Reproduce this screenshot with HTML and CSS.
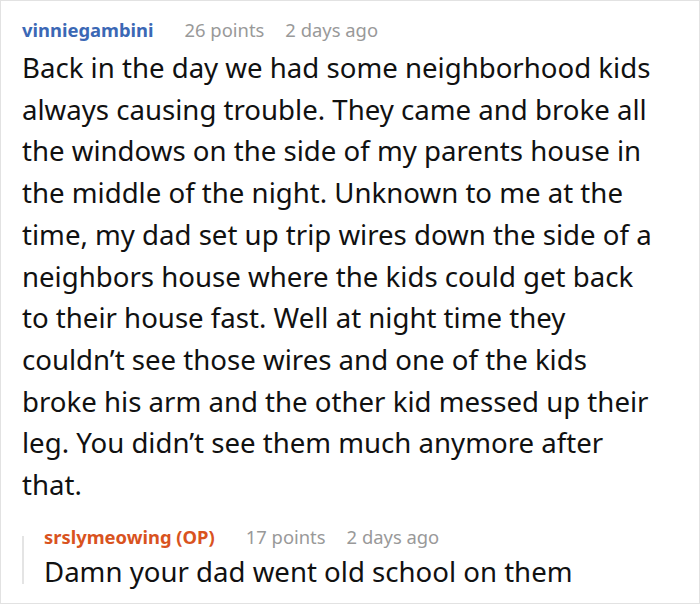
FILE: index.html
```html
<!DOCTYPE html>
<html>
<head>
<meta charset="utf-8">
<link rel="stylesheet" href="styles.css">
</head>
<body>
<div class="card">
  <div class="comment">
    <div class="meta">
      <span class="author">vinniegambini</span>
      <span class="info">26 points</span>
      <span class="info">2 days ago</span>
    </div>
    <p class="text">Back in the day we had some neighborhood kids always causing trouble. They came and broke all the windows on the side of my parents house in the middle of the night. Unknown to me at the time, my dad set up trip wires down the side of a neighbors house where the kids could get back to their house fast. Well at night time they couldn’t see those wires and one of the kids broke his arm and the other kid messed up their leg. You didn’t see them much anymore after that.</p>
  </div>
  <div class="reply">
    <div class="meta">
      <span class="author op">srslymeowing (OP)</span>
      <span class="info">17 points</span>
      <span class="info">2 days ago</span>
    </div>
    <p class="text">Damn your dad went old school on them</p>
  </div>
</div>
</body>
</html>
```
FILE: styles.css
```css
html, body {
  margin: 0;
  padding: 0;
  background: #fff;
}
.card {
  box-sizing: border-box;
  width: 700px;
  height: 604px;
  border: 1px solid #e2e2e2;
  padding: 17px 38px 0 21px;
  font-family: "Noto Sans", sans-serif;
  overflow: hidden;
}
.meta {
  display: flex;
  gap: 21px;
  font-size: 18.4px;
  line-height: 24px;
  align-items: baseline;
  white-space: nowrap;
}
.author {
  font-weight: bold;
  color: #3b68b5;
  margin-right: 10px;
}
.author.op {
  color: #d9531e;
}
.info {
  color: #999;
}
.text {
  margin: 5px 0 0 0;
  font-size: 27.6px;
  line-height: 41.7px;
  color: #111;
}
.reply {
  position: relative;
  margin-top: 19px;
  padding-left: 22px;
}
.reply::before {
  content: "";
  position: absolute;
  left: 0;
  top: 11px;
  bottom: 8px;
  width: 2px;
  background: #e4e4e4;
}
.reply .text {
  margin-top: 2px;
}
```
